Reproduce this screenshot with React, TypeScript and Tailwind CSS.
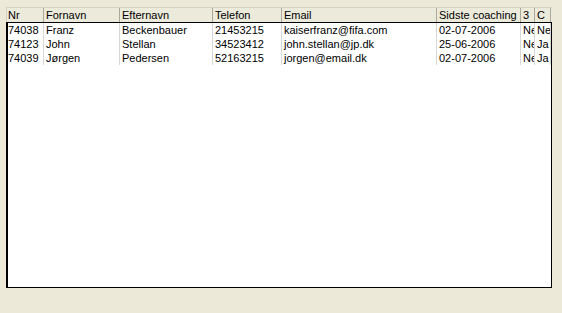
import React from 'react'

const columns = [
  { label: 'Nr', width: 'w-[37px]' },
  { label: 'Fornavn', width: 'w-[76px]' },
  { label: 'Efternavn', width: 'w-[93px]' },
  { label: 'Telefon', width: 'w-[69px]' },
  { label: 'Email', width: 'w-[155px]' },
  { label: 'Sidste coaching', width: 'w-[84px]' },
  { label: '3', width: 'w-[14px]' },
  { label: 'C', width: 'w-[16px]' },
]

const rows = [
  ['74038', 'Franz', 'Beckenbauer', '21453215', 'kaiserfranz@fifa.com', '02-07-2006', 'Nej', 'Nej'],
  ['74123', 'John', 'Stellan', '34523412', 'john.stellan@jp.dk', '25-06-2006', 'Nej', 'Ja'],
  ['74039', 'Jørgen', 'Pedersen', '52163215', 'jorgen@email.dk', '02-07-2006', 'Nej', 'Ja'],
]

export default function App() {
  return (
    <div
      className="w-[562px] h-[313px] bg-[#ece9d8] pt-[7px] pl-[6px] overflow-hidden text-[11px] text-black"
      style={{ fontFamily: '"Liberation Sans", Arial, sans-serif' }}
    >
      <div className="w-[546px]">
        {/* Column headers */}
        <div className="flex h-[15px] bg-[#ebeadb] border-t border-l border-[#d6d2c2]">
          {columns.map((c, i) => (
            <div
              key={c.label}
              className={`${c.width} shrink-0 h-full border-r border-[#aca899] ${i === 0 ? 'pl-[1px]' : 'pl-[2px]'} leading-[14px] whitespace-nowrap overflow-hidden`}
            >
              {c.label}
            </div>
          ))}
        </div>

        {/* List body */}
        <div className="h-[266px] bg-white border border-black border-l-2">
          {rows.map((r) => (
            <div key={r[0]} className="flex h-[14px]">
              {r.map((v, i) => (
                <div
                  key={i}
                  className={`${i === 0 ? 'w-[36px] pl-0' : columns[i].width + ' pl-[2px]'} shrink-0 h-full border-r border-[#d8d8d8] leading-[14px] whitespace-nowrap overflow-hidden text-clip`}
                >
                  {v}
                </div>
              ))}
            </div>
          ))}
        </div>
      </div>
    </div>
  )
}
